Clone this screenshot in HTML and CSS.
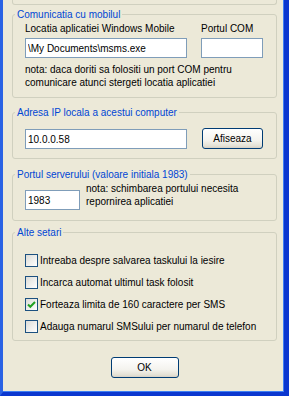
FILE: index.html
```html
<!DOCTYPE html>
<html lang="ro">
<head>
  <meta charset="UTF-8" />
  <meta name="viewport" content="width=device-width, initial-scale=1" />
  <title>Setari</title>
  <link rel="stylesheet" href="styles.css">
</head>
<body>

  <div class="window">
    <!-- capatul grupului de deasupra -->
    <div class="prev-group"></div>

    <!-- COMUNICATIA CU MOBILUL -->
    <fieldset class="group group-mobile">
      <legend>Comunicatia cu mobilul</legend>
      <div class="row">
        <div class="col col-path">
          <label for="path">Locatia aplicatiei Windows Mobile</label>
          <input type="text" id="path" class="text" value="\My Documents\msms.exe">
        </div>
        <div class="col col-com">
          <label for="com">Portul COM</label>
          <input type="text" id="com" class="text">
        </div>
      </div>
      <p class="note note-mobile">nota: daca doriti sa folositi un port COM pentru<br>comunicare atunci stergeti locatia aplicatiei</p>
    </fieldset>

    <!-- ADRESA IP -->
    <fieldset class="group group-ip">
      <legend>Adresa IP locala a acestui computer</legend>
      <div class="row row-ip">
        <input type="text" class="text text-ip" value="10.0.0.58">
        <button type="button" class="btn btn-show">Afiseaza</button>
      </div>
    </fieldset>

    <!-- PORTUL SERVERULUI -->
    <fieldset class="group group-port">
      <legend>Portul serverului (valoare initiala 1983)</legend>
      <div class="row row-port">
        <input type="text" class="text text-port" value="1983">
        <p class="note">nota: schimbarea portului necesita<br>repornirea aplicatiei</p>
      </div>
    </fieldset>

    <!-- ALTE SETARI -->
    <fieldset class="group group-other">
      <legend>Alte setari</legend>
      <label class="check">
        <span class="box"></span>
        Intreaba despre salvarea taskului la iesire
      </label>
      <label class="check">
        <span class="box"></span>
        Incarca automat ultimul task folosit
      </label>
      <label class="check">
        <span class="box">
          <svg width="11" height="11" viewBox="0 0 11 11">
            <path d="M2 5.5 L4.3 7.8 L9 3" fill="none" stroke="#21a121" stroke-width="2"/>
          </svg>
        </span>
        Forteaza limita de 160 caractere per SMS
      </label>
      <label class="check">
        <span class="box"></span>
        Adauga numarul SMSului per numarul de telefon
      </label>
    </fieldset>

    <div class="actions">
      <button type="button" class="btn btn-ok">OK</button>
    </div>
  </div>

</body>
</html>
```

FILE: styles.css
```css
/* RESET */
* {
  margin: 0;
  padding: 0;
  box-sizing: border-box;
}

html, body {
  width: 100%;
  height: 100%;
  overflow: hidden;
  font-family: 'Liberation Sans', Arial, sans-serif;
  font-size: 10px;
  line-height: 13px;
  color: #000;
}

body {
  background: #ece9d8;
}

.window {
  height: 396px;
  background: #ece9d8;
  border-left: 3px solid #2a62e4;
  border-right: 5px solid #0b37cf;
  border-bottom: 4px solid #0b37cf;
  box-shadow: inset -1px -1px 0 #3f7ff2;
  padding: 0 7px 0 9px;
}

.prev-group {
  height: 5px;
  border: 1px solid #d0d0bf;
  border-top: none;
  border-radius: 0 0 3px 3px;
}

.group {
  border: 1px solid #d0d0bf;
  border-radius: 3px;
  padding: 0 12px 8px 12px;
  min-width: 0;
}

.group legend {
  margin-left: -10px;
  padding: 0 2px;
  color: #0046d5;
  line-height: 13px;
}

.row {
  display: flex;
}

/* Comunicatia cu mobilul */
.group-mobile {
  margin-top: 3px;
  padding-top: 1px;
}

.group-mobile .row {
  gap: 14px;
}

.col label {
  display: block;
}

.col-path {
  width: 162px;
}

.col-com {
  width: 62px;
}

.text {
  display: block;
  width: 100%;
  height: 20px;
  margin-top: 3px;
  border: 1px solid #7f9db9;
  background: #fff;
  font: inherit;
  padding: 0 2px;
  color: #000;
  outline: none;
}

.note-mobile {
  margin-top: 5px;
}

/* Adresa IP */
.group-ip {
  margin-top: 8px;
  padding-top: 9px;
  padding-bottom: 9px;
}

.row-ip {
  gap: 15px;
  align-items: flex-start;
}

.text-ip {
  width: 162px;
  margin-top: 1px;
}

.btn {
  height: 21px;
  border: 1px solid #003c74;
  border-radius: 3px;
  background: linear-gradient(#ffffff, #f4f3ee 60%, #e3e0d4 90%, #d6d0c5);
  font: inherit;
  color: #000;
  cursor: pointer;
}

.btn-show {
  width: 61px;
}

/* Portul serverului */
.group-port {
  margin-top: 9px;
  padding-top: 1px;
  padding-bottom: 10px;
}

.row-port {
  gap: 6px;
  align-items: flex-start;
}

.text-port {
  width: 55px;
  flex: none;
  margin-top: 8px;
}

/* Alte setari */
.group-other {
  margin-top: 5px;
  padding-top: 10px;
  padding-bottom: 3px;
}

.check {
  display: flex;
  align-items: center;
  gap: 2px;
  height: 22px;
}

.check .box {
  display: flex;
  align-items: center;
  justify-content: center;
  width: 13px;
  height: 13px;
  flex: none;
  border: 1px solid #1c5180;
  background: linear-gradient(135deg, #dcdcd7, #ffffff);
}

/* OK */
.actions {
  display: flex;
  justify-content: center;
  margin-top: 16px;
}

.btn-ok {
  width: 68px;
}
```
